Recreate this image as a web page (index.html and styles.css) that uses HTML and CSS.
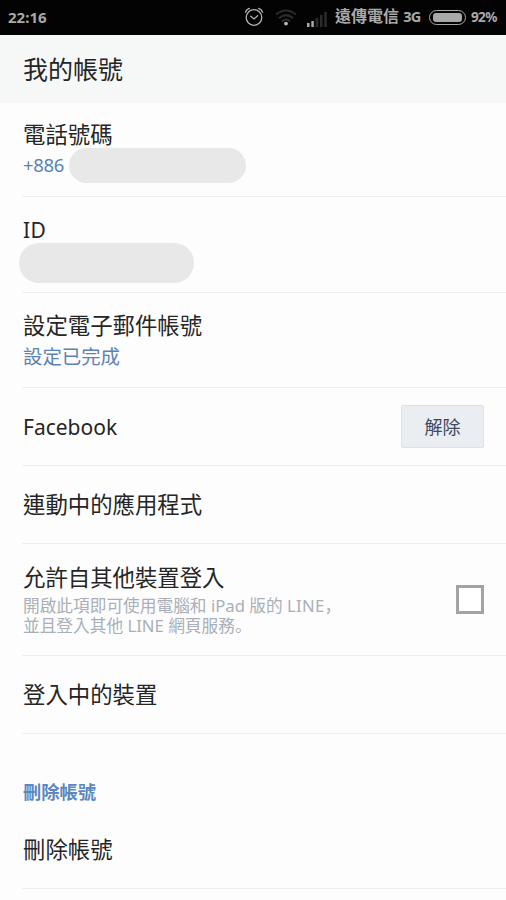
FILE: index.html
```html
<!DOCTYPE html>
<html lang="zh-Hant">
<head>
<meta charset="utf-8">
<title>我的帳號</title>
<link rel="stylesheet" href="styles.css">
</head>
<body>
<div class="status">
  <span class="clock">22:16</span>
  <svg class="alarm" width="20" height="20" viewBox="0 0 20 20" fill="none" stroke="#b4b4b4" stroke-width="1.3" stroke-linecap="round"><circle cx="10" cy="10.5" r="7.8"/><path d="M6.8 9.3 10 12l3.6-3.2M1.4 5.2C2 3.5 3.6 1.900 5.400 1.300M18.600 5.200C18 3.500 16.400 1.900 14.600 1.300"/></svg>
  <svg class="wifi" width="22" height="17" viewBox="0 0 22 17" fill="none" stroke="#2c2c2c" stroke-width="2"><path d="M1 5.500Q11-2.500 21 5.500M4 9.200Q11 3 18 9.200M7 12.500Q11 8.500 15 12.500"/><circle cx="11" cy="14.600" r="1.900" fill="#b8b8b8" stroke="none"/></svg>
  <svg class="signal" width="20" height="17" viewBox="0 0 20 17" fill="#2c2c2c"><path fill="#aaa" d="M0 12h2.500v4H0zM4.300 10h2.500v6H4.300z"/><path d="M8.700 7h2.500v9H8.700zM13 4h2.500v12H13zM17.300 1h2.500v15h-2.500z"/></svg>
  <span class="carrier">遠傳電信 <span class="net">3G</span></span>
  <span class="battery"><span class="charge"></span></span>
  <span class="percent">92%</span>
</div>
<header class="header"><h1>我的帳號</h1></header>
<main class="list">
  <section class="row phone">
    <div class="title">電話號碼</div>
    <div class="value"><span class="prefix">+886</span><span class="mask mask-phone"></span></div>
  </section>
  <section class="row account-id">
    <div class="title"><span class="latin-id">ID</span></div>
    <div class="mask mask-id"></div>
  </section>
  <section class="row email">
    <div class="title">設定電子郵件帳號</div>
    <div class="value">設定已完成</div>
  </section>
  <section class="row single">
    <div class="title facebook">Facebook</div>
    <button class="unlink">解除</button>
  </section>
  <section class="row single"><div class="title">連動中的應用程式</div></section>
  <section class="row login">
    <div>
      <div class="title">允許自其他裝置登入</div>
      <div class="note"><span class="line">開啟此項即可使用電腦和 iPad 版的 <span class="brand">LINE</span><span class="punct" lang="ja">，</span></span><span class="line">並且登入其他 LINE 網頁服務<span class="punct" lang="ja">。</span></span></div>
    </div>
    <span class="checkbox"></span>
  </section>
  <section class="row single"><div class="title">登入中的裝置</div></section>
  <h2 class="group">刪除帳號</h2>
  <section class="row single"><div class="title">刪除帳號</div></section>
</main>
</body>
</html>
```
FILE: styles.css
```css
* { box-sizing: border-box; }
body {
  margin: 0;
  height: 900px;
  overflow: hidden;
  background: #fdfdfd;
  color: #252525;
  font-family: "Noto Sans", "Noto Sans CJK TC", sans-serif;
  font-weight: 400;
}
.status {
  display: flex;
  align-items: center;
  height: 35px;
  padding: 0 8px;
  background: #030303;
  color: #a9a9a9;
  font-size: 15px;
  font-weight: 700;
  line-height: 35px;
  white-space: nowrap;
}
.clock { width: 236px; font-size: 15px; }
.alarm { margin-top: -2px; }
.wifi { margin-left: 11px; }
.signal { margin: 3px 0 0 10px; }
.carrier { width: 88px; margin: -3px 0 0 8px; font-size: 16px; }
.net { font-size: 14.500px; letter-spacing: -.6px; }
.battery {
  width: 37px;
  height: 15px;
  margin-left: 6px;
  padding: 2px 3px;
  border: 1px solid #a9a9a9;
  border-radius: 8px;
}
.charge { display: block; height: 9px; border-radius: 3px; background: #a9a9a9; }
.percent { margin-left: 5px; font-size: 13.500px; letter-spacing: -.6px; }
.header {
  display: flex;
  align-items: center;
  height: 68px;
  padding-left: 23px;
  background: #f6f8f8;
}
h1 { margin: 0; font-size: 25px; font-weight: 400; line-height: 36px; }
.list { padding-left: 22px; }
.row { height: 78px; padding-left: 1px; border-bottom: 1px solid #efefef; }
.title { font-size: 22.400px; line-height: 32px; white-space: nowrap; }
.value { color: #5c82b3; font-size: 19.400px; line-height: 28px; }
.phone { height: 94px; padding-top: 16px; }
.phone .value { display: flex; align-items: center; height: 34px; margin-top: -3px; }
.prefix { width: 46px; font-size: 18.500px; letter-spacing: -.3px; }
.mask { background: #e8e8e8; }
.mask-phone { width: 177px; height: 35px; border-radius: 18px; }
.account-id { height: 96px; padding-top: 17px; }
.account-id .title { height: 29px; }
.latin-id { font-size: 21px; letter-spacing: .5px; }
.mask-id { width: 175px; height: 40px; margin-left: -4px; border-radius: 20px; }
.email { height: 95px; padding-top: 17px; }
.email .value { margin-top: 1px; }
.single { display: flex; align-items: center; justify-content: space-between; padding-right: 22px; }
.single .title { padding-top: 1px; }
.facebook { font-size: 21px; }
.unlink {
  width: 83px;
  height: 43px;
  padding: 0 0 2px;
  border: 1px solid #dde1e7;
  border-radius: 2px;
  background: #eaedf2;
  color: #3f4861;
  font: 400 18px/26px "Noto Sans CJK TC", sans-serif;
}
.login { display: flex; justify-content: space-between; height: 112px; padding: 18px 22px 0 1px; }
.note { color: #a9afb8; font-size: 16.700px; line-height: 20px; margin-top: 1px; }
.line { display: block; height: 20px; white-space: nowrap; }
.brand { letter-spacing: .3px; }
.punct { font-family: "Noto Sans CJK JP", sans-serif; }
.checkbox { width: 28px; height: 29px; margin-top: 23px; border: 3px solid #a3a3a3; background: #fff; }
.group {
  height: 77px;
  margin: 0;
  padding: 45px 0 0 1px;
  color: #5c86bd;
  font-size: 18.300px;
  font-weight: 700;
  line-height: 26px;
}
```
